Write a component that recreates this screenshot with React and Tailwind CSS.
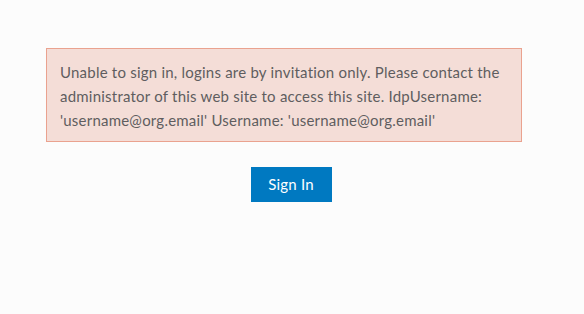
// App.jsx — sign-in refused notice with a Sign In button below.

export default function App() {
  return (
    <div className="min-h-screen w-full bg-[#fcfcfc] pt-[48px] font-['Lato','Open_Sans',sans-serif]">
      <div className="ml-[46px] w-[476px] border border-[#eaa28f] bg-[#f4ddd7] pl-[13px] pr-[12px] pt-[11px] pb-[9px] text-[15px] leading-[24px] tracking-[0.22px] text-[#5f5d5f]">
        Unable to sign in, logins are by invitation only. Please contact the administrator of this web site to access this site. IdpUsername: 'username@org.email' Username: 'username@org.email'
      </div>
      <div className="mt-[25px] flex justify-center pr-[2px]">
        <button className="h-[35px] w-[81px] bg-[#0079c1] text-[15px] tracking-[0.2px] text-white">
          Sign In
        </button>
      </div>
    </div>
  )
}
